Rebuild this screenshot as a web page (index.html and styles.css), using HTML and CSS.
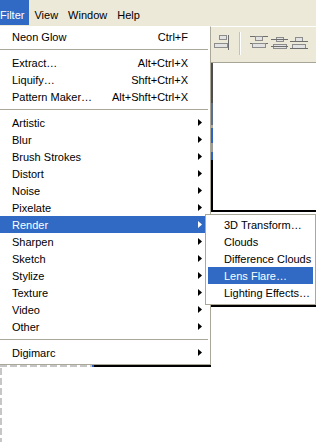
FILE: index.html
```html
<!DOCTYPE html>
<html lang="en">

<head>
    <meta charset="UTF-8">
    <title>Filter menu</title>
    <link rel="stylesheet" href="styles.css">
</head>

<body>
    <div class="menubar">
        <span class="open">Filter</span>
        <span>View</span>
        <span>Window</span>
        <span>Help</span>
    </div>

    <div class="toolbar">
        <svg width="105" height="35" viewBox="0 0 105 35">
            <!-- align right edges -->
            <rect class="box" x="8.5" y="8.5" width="7" height="4" />
            <rect class="box" x="3.5" y="16.5" width="13" height="4" />
            <line class="rule" x1="17.5" y1="8" x2="17.5" y2="23" />
            <!-- separator -->
            <line x1="28.5" y1="5" x2="28.5" y2="28" stroke="#c5c2b2" />
            <line x1="29.5" y1="5" x2="29.5" y2="28" stroke="#fff" />
            <!-- distribute top -->
            <line class="rule" x1="39" y1="9.5" x2="57" y2="9.5" />
            <rect class="box" x="44.5" y="9.5" width="7" height="4" />
            <line class="rule" x1="39" y1="16.5" x2="57" y2="16.5" />
            <rect class="box" x="41.5" y="16.5" width="13" height="4" />
            <!-- distribute centers -->
            <rect class="box" x="65.5" y="10.5" width="7" height="4" />
            <line class="rule" x1="60" y1="12.5" x2="77" y2="12.5" />
            <rect class="box" x="62.5" y="17.5" width="13" height="4" />
            <line class="rule" x1="60" y1="19.5" x2="77" y2="19.5" />
            <!-- distribute bottom -->
            <rect class="box" x="84.5" y="10.5" width="7" height="4" />
            <line class="rule" x1="79" y1="14.5" x2="97" y2="14.5" />
            <rect class="box" x="81.5" y="17.5" width="13" height="4" />
            <line class="rule" x1="79" y1="21.5" x2="97" y2="21.5" />
        </svg>
    </div>

    <div class="workspace">
        <div class="doc-frame"></div>
        <div class="doc-edge edge-b"></div>
        <div class="doc-edge edge-c"></div>
        <div class="marquee-h"></div>
        <div class="marquee-v"></div>
    </div>

    <div class="menu filter-menu">
        <div class="item"><span>Neon Glow</span><span class="key">Ctrl+F</span></div>
        <div class="sep"></div>
        <div class="item"><span>Extract…</span><span class="key">Alt+Ctrl+X</span></div>
        <div class="item"><span>Liquify…</span><span class="key">Shft+Ctrl+X</span></div>
        <div class="item"><span>Pattern Maker…</span><span class="key">Alt+Shft+Ctrl+X</span></div>
        <div class="sep"></div>
        <div class="item"><span>Artistic</span><i class="arrow"></i></div>
        <div class="item"><span>Blur</span><i class="arrow"></i></div>
        <div class="item"><span>Brush Strokes</span><i class="arrow"></i></div>
        <div class="item"><span>Distort</span><i class="arrow"></i></div>
        <div class="item"><span>Noise</span><i class="arrow"></i></div>
        <div class="item"><span>Pixelate</span><i class="arrow"></i></div>
        <div class="item active"><span>Render</span><i class="arrow"></i></div>
        <div class="item"><span>Sharpen</span><i class="arrow"></i></div>
        <div class="item"><span>Sketch</span><i class="arrow"></i></div>
        <div class="item"><span>Stylize</span><i class="arrow"></i></div>
        <div class="item"><span>Texture</span><i class="arrow"></i></div>
        <div class="item"><span>Video</span><i class="arrow"></i></div>
        <div class="item"><span>Other</span><i class="arrow"></i></div>
        <div class="sep"></div>
        <div class="item"><span>Digimarc</span><i class="arrow"></i></div>
    </div>

    <div class="menu render-menu">
        <div class="item"><span>3D Transform…</span></div>
        <div class="item"><span>Clouds</span></div>
        <div class="item"><span>Difference Clouds</span></div>
        <div class="item active"><span>Lens Flare…</span></div>
        <div class="item"><span>Lighting Effects…</span></div>
    </div>
</body>

</html>
```

FILE: styles.css
```css
* {
    margin: 0;
    padding: 0;
    box-sizing: border-box;
}

body {
    font-family: "Liberation Sans", Arial, sans-serif;
    font-size: 11px;
    color: #000;
    background: #fff;
    width: 316px;
    height: 442px;
    overflow: hidden;
    position: relative;
}

/* menu bar */
.menubar {
    display: flex;
    height: 26px;
    margin-left: -5px;
    background: #ece9d8;
}

.menubar span {
    height: 25px;
    padding: 6px 5px 0;
    line-height: 19px;
}

.menubar .open {
    background: #316ac5;
    color: #fff;
}

/* options bar */
.toolbar {
    height: 37px;
    padding-left: 211px;
    background: #ece9d8;
    border-top: 1px solid #fff;
    border-bottom: 1px solid #a7a696;
}

.toolbar svg {
    display: block;
}

.toolbar .box {
    fill: #e2e2e2;
    stroke: #8c8c8c;
}

.toolbar .rule {
    stroke: #6e6e6e;
}

/* document area */
.workspace {
    position: relative;
    height: 379px;
}

.doc-frame {
    position: absolute;
    left: 213px;
    top: 0;
    right: 0;
    height: 149px;
    border-bottom: 2px solid #000;
}

.doc-frame::before {
    content: "";
    position: absolute;
    left: -2px;
    top: 0;
    bottom: -2px;
    width: 2px;
    background: linear-gradient(#4e4e4e 0 40px, #5d6d8c 40px 62px, #a8a8a0 62px 65px, #2d62c4 65px 80px, #9c9c96 80px 89px, #2d62c4 89px 97px, #000 97px);
}

.doc-edge {
    position: absolute;
    height: 2px;
    background: #000;
}

.edge-b {
    left: 210px;
    right: 0;
    top: 242px;
}

.edge-c {
    left: 92px;
    width: 119px;
    top: 302px;
}

.edge-c::before {
    content: "";
    position: absolute;
    left: 0;
    top: 0;
    width: 2px;
    height: 2px;
    background: #2d62c4;
}

.marquee-h {
    position: absolute;
    left: 0;
    top: 302px;
    width: 92px;
    height: 2px;
    background: repeating-linear-gradient(90deg, #c6c6c6 0 7px, transparent 7px 10px);
}

.marquee-v {
    position: absolute;
    left: 0;
    top: 305px;
    bottom: 0;
    width: 2px;
    background: repeating-linear-gradient(180deg, #c6c6c6 0 7px, transparent 7px 10px);
}

/* drop-down menus */
.menu {
    position: absolute;
    background: #fff;
    border: 1px solid #aca899;
    padding: 1px 2px 3px;
}

.filter-menu {
    left: -3px;
    top: 26px;
    width: 214px;
    border-top-color: #fff;
}

.render-menu {
    left: 205px;
    top: 214px;
    width: 111px;
}

.item {
    display: flex;
    align-items: center;
    height: 17px;
    padding: 0 20px 0 12px;
    white-space: nowrap;
}

.render-menu .item {
    padding-left: 16px;
}

.item.active {
    background: #316ac5;
    color: #fff;
}

.key {
    margin-left: auto;
}

.arrow {
    margin-left: auto;
    margin-right: -14px;
    width: 4px;
    height: 7px;
    background: #000;
    clip-path: polygon(0 0, 100% 50%, 0 100%);
}

.item.active .arrow {
    background: #fff;
}

.sep {
    height: 9px;
    padding-top: 4px;
}

.sep::after {
    content: "";
    display: block;
    height: 1px;
    background: #aca899;
}
```
